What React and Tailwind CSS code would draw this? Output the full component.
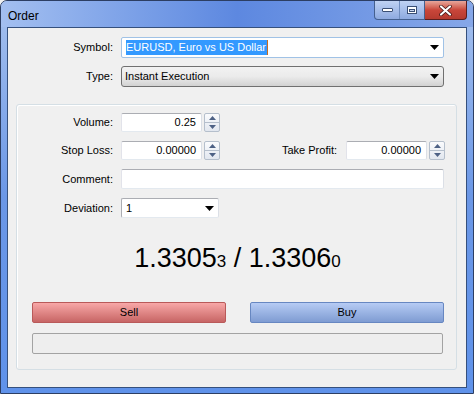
import React from 'react';

const font = { fontFamily: '"Liberation Sans", Arial, sans-serif' };

// small black dropdown triangle
const Caret = () => (
  <svg width="9" height="5" viewBox="0 0 9 5" className="shrink-0">
    <path d="M0 0h9L4.5 5z" fill="#000" />
  </svg>
);

const Spinner = () => (
  <div className="flex flex-col w-[16px] h-[19px] ml-[2px] border border-[#b5bfcc] rounded-[2px] bg-gradient-to-b from-[#fafbfd] to-[#e2e7ef]">
    <div className="flex-1 flex items-center justify-center border-b border-[#b5bfcc]">
      <svg width="7" height="4" viewBox="0 0 7 4"><path d="M3.5 0L7 4H0z" fill="#4d6185" /></svg>
    </div>
    <div className="flex-1 flex items-center justify-center">
      <svg width="7" height="4" viewBox="0 0 7 4"><path d="M0 0h7L3.5 4z" fill="#4d6185" /></svg>
    </div>
  </div>
);

const NumField = ({ value }) => (
  <div className="flex items-center">
    <div className="w-[81px] h-[19px] bg-white border border-[#abadb3] border-r-[#dbdfe6] border-b-[#e3e9ef] border-l-[#e2e3ea] rounded-[2px] flex items-center justify-end pr-[5px] text-[11px] text-black">
      {value}
    </div>
    <Spinner />
  </div>
);

const Label = ({ children }) => (
  <div className="w-[104px] pr-[8px] text-right text-[11px] text-black shrink-0">{children}</div>
);

export default function App() {
  return (
    <div style={font} className="w-[474px] h-[394px] overflow-hidden bg-[#f0f0f0]">
      <div className="w-[474px] h-[394px] flex flex-col rounded-t-[7px] border border-[#2c3e63] bg-gradient-to-b from-[#a6c1ee] via-[#6b97e6] to-[#5f92ea]">
        {/* Title bar */}
        <div className="h-[26px] flex items-start justify-between bg-gradient-to-r from-[#a3bff0] via-[#5d88e0] to-[#86a7e8] rounded-t-[6px]">
          <div className="pl-[7px] pt-[6px] text-[12px] text-black">Order</div>
          <div className="flex mr-[6px]">
            <div className="flex h-[19px] border border-t-0 border-[#44608f] rounded-bl-[4px] overflow-hidden bg-gradient-to-b from-[#bfd2f3] to-[#8eaae0]">
              <div className="w-[25px] flex items-center justify-center border-r border-[#6f8dbf]">
                <div className="w-[11px] h-[4px] bg-white border border-[#3a4f75] rounded-[1px]" />
              </div>
              <div className="w-[24px] flex items-center justify-center">
                <div className="w-[10px] h-[8px] border border-[#3a4f75] bg-white flex items-center justify-center">
                  <div className="w-[6px] h-[3px] border border-[#3a4f75] bg-[#c9d6ee]" />
                </div>
              </div>
            </div>
            <div className="w-[42px] h-[19px] flex items-center justify-center border border-t-0 border-l-0 border-[#5b1e1e] rounded-br-[4px] bg-gradient-to-b from-[#e6a69b] via-[#c9463a] to-[#b53a2f]">
              <svg width="13" height="11" viewBox="0 0 13 11">
                <path d="M2 1.5l9 8M11 1.5l-9 8" stroke="#3a1010" strokeWidth="3.6" strokeLinecap="round" />
                <path d="M2 1.5l9 8M11 1.5l-9 8" stroke="#fff" strokeWidth="2.2" strokeLinecap="round" />
              </svg>
            </div>
          </div>
        </div>

        {/* Client area */}
        <div className="ml-[6px] w-[460px] h-[361px] bg-[#f0f0f0] border border-[#35507d] flex flex-col">
          <div className="pt-[9px] pl-[9px] flex flex-col gap-[8px]">
            <div className="flex items-center">
              <Label>Symbol:</Label>
              <div className="w-[323px] h-[21px] bg-white border border-[#a0c2e6] rounded-[2px] flex items-center justify-between pl-[4px] pr-[4px]">
                <span className="text-[11px] leading-[15px] bg-[#3399ff] text-white pr-[1px] border-r border-[#c86d1f]">EURUSD, Euro vs US Dollar</span>
                <Caret />
              </div>
            </div>
            <div className="flex items-center">
              <Label>Type:</Label>
              <div className="w-[323px] h-[21px] border border-[#707070] rounded-[3px] bg-gradient-to-b from-[#f2f2f2] via-[#ebebeb] to-[#d2d2d2] flex items-center justify-between pl-[3px] pr-[4px]">
                <span className="text-[11px] text-black">Instant Execution</span>
                <Caret />
              </div>
            </div>
          </div>

          {/* Group box */}
          <div className="mt-[17px] ml-[8px] w-[441px] h-[266px] border border-[#d5dfe5] rounded-[3px] shadow-[inset_1px_1px_0_#fff] flex flex-col">
            <div className="pt-[8px] flex flex-col gap-[9px]">
              <div className="flex items-center">
                <Label>Volume:</Label>
                <NumField value="0.25" />
              </div>
              <div className="flex items-center">
                <Label>Stop Loss:</Label>
                <NumField value="0.00000" />
                <div className="w-[126px] pr-[9px] text-right text-[11px] text-black">Take Profit:</div>
                <NumField value="0.00000" />
              </div>
              <div className="flex items-center">
                <Label>Comment:</Label>
                <div className="w-[323px] h-[20px] bg-white border border-[#abadb3] border-b-[#e3e9ef] border-r-[#dbdfe6] border-l-[#e2e3ea] rounded-[2px]" />
              </div>
              <div className="flex items-center">
                <Label>Deviation:</Label>
                <div className="w-[98px] h-[20px] bg-white border border-[#abadb3] border-b-[#e3e9ef] border-r-[#dbdfe6] rounded-[2px] flex items-center justify-between pl-[4px] pr-[4px]">
                  <span className="text-[11px] text-black">1</span>
                  <Caret />
                </div>
              </div>
            </div>

            {/* Price */}
            <div className="mt-[21px] h-[38px] flex items-baseline justify-center pl-[2px] text-black">
              <span className="text-[27px] leading-[38px]">1.3305</span>
              <span className="text-[17px]">3</span>
              <span className="text-[27px] leading-[38px]">&nbsp;/&nbsp;1.3306</span>
              <span className="text-[17px]">0</span>
            </div>

            {/* Buttons */}
            <div className="mt-[25px] ml-[15px] flex gap-[24px]">
              <div className="w-[194px] h-[21px] border border-[#b95a5a] rounded-[2px] bg-gradient-to-b from-[#f8a8a8] to-[#c76565] flex items-center justify-center text-[11px] text-black">
                Sell
              </div>
              <div className="w-[194px] h-[21px] border border-[#6787c1] rounded-[2px] bg-gradient-to-b from-[#b6cbf4] to-[#7f9cd2] flex items-center justify-center text-[11px] text-black">
                Buy
              </div>
            </div>
            <div className="mt-[10px] ml-[15px] w-[411px] h-[21px] border border-[#a3a3a3] rounded-[2px] bg-[#eeeeee]" />
          </div>
        </div>
      </div>
    </div>
  );
}
